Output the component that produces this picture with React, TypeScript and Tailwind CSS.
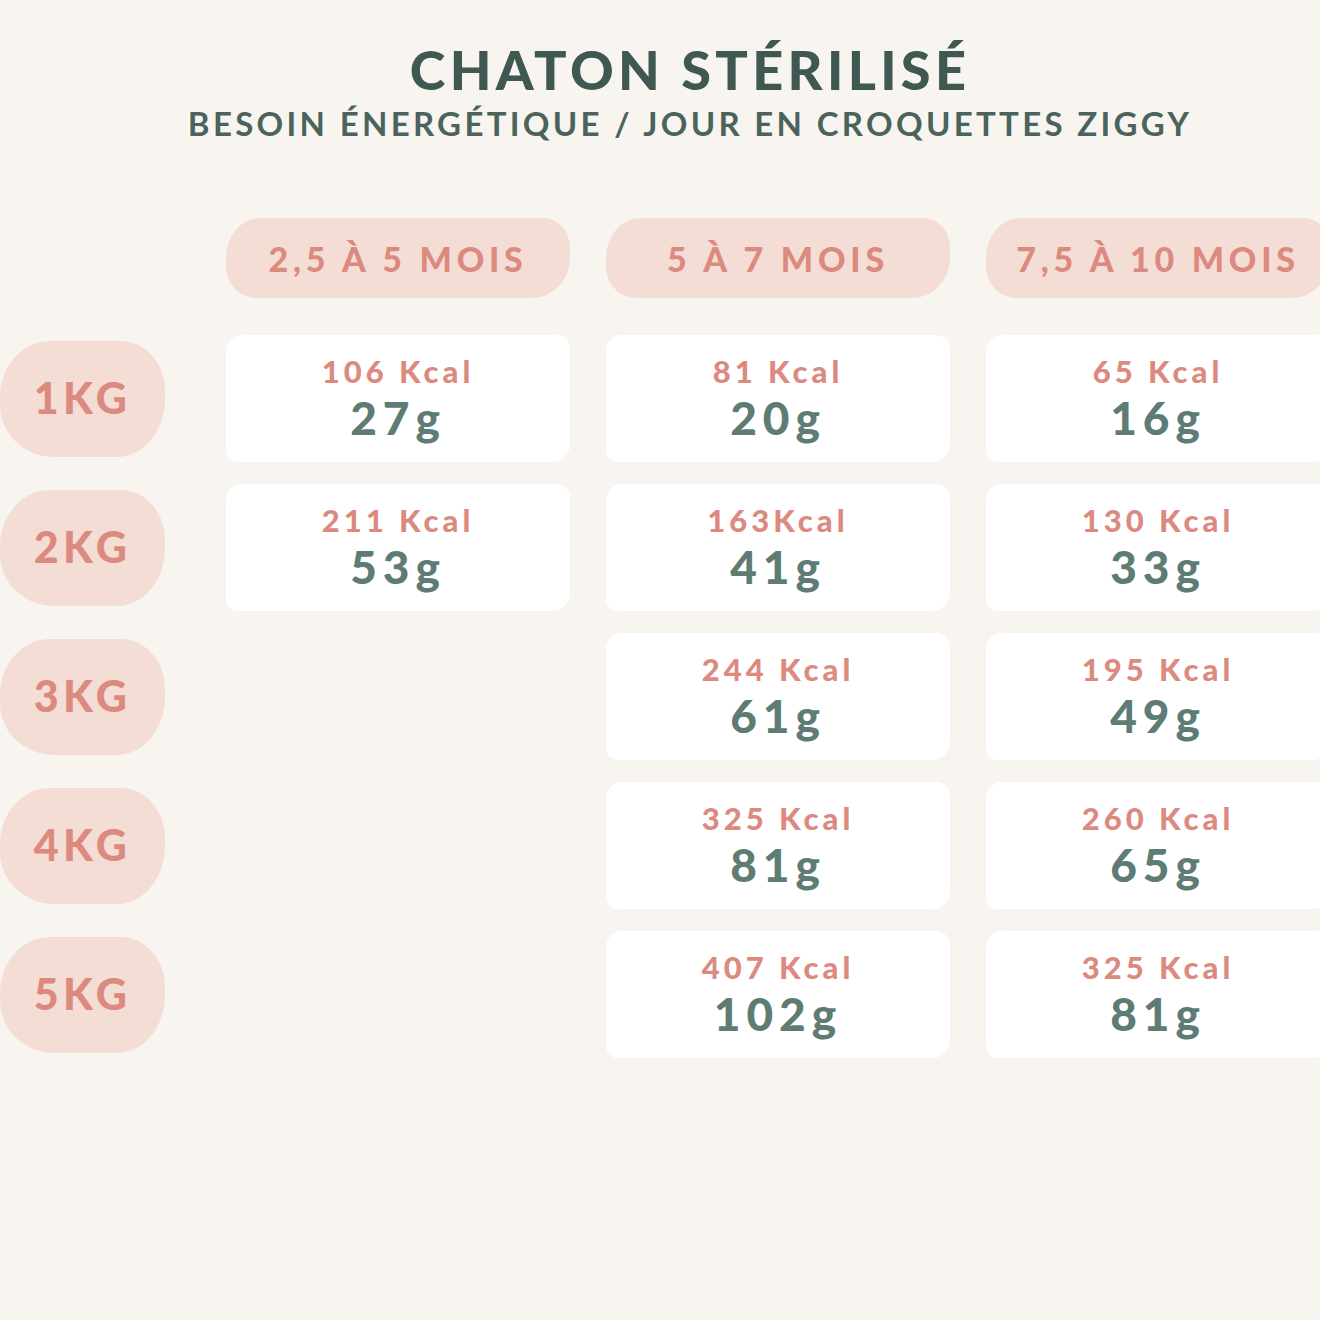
import React from "react";

type Cell = { kcal: string; g: string } | null;

const ages = ["2,5 À 5 MOIS", "5 À 7 MOIS", "7,5 À 10 MOIS"];

const rows: { kg: string; cells: Cell[] }[] = [
  { kg: "1KG", cells: [{ kcal: "106 Kcal", g: "27g" }, { kcal: "81 Kcal", g: "20g" }, { kcal: "65 Kcal", g: "16g" }] },
  { kg: "2KG", cells: [{ kcal: "211 Kcal", g: "53g" }, { kcal: "163Kcal", g: "41g" }, { kcal: "130 Kcal", g: "33g" }] },
  { kg: "3KG", cells: [null, { kcal: "244 Kcal", g: "61g" }, { kcal: "195 Kcal", g: "49g" }] },
  { kg: "4KG", cells: [null, { kcal: "325 Kcal", g: "81g" }, { kcal: "260 Kcal", g: "65g" }] },
  { kg: "5KG", cells: [null, { kcal: "407 Kcal", g: "102g" }, { kcal: "325 Kcal", g: "81g" }] },
];

const font = { fontFamily: "Lato, 'Open Sans', sans-serif" };

export default function App() {
  return (
    <div className="w-[1320px] h-[1320px] overflow-hidden bg-[#f8f5f0]" style={font}>
      {/* heading */}
      <div className="pl-[60px] pt-[40px] flex flex-col items-center">
        <h1 className="text-[54px] leading-[60px] font-black tracking-[0.08em] text-[#3f5852]">CHATON STÉRILISÉ</h1>
        <p className="mt-[3px] text-[33px] leading-[40px] font-bold tracking-[0.1em] text-[#4b635c]">
          BESOIN ÉNERGÉTIQUE / JOUR EN CROQUETTES ZIGGY
        </p>
      </div>

      <div className="mt-[75px] grid grid-cols-[190px_344px_344px_344px] gap-x-[36px] gap-y-[22px] w-[1360px]">
        {/* age headers */}
        <div />
        {ages.map((a) => (
          <div
            key={a}
            className="h-[80px] mb-[15px] flex items-center justify-center bg-[#f4ddd4] rounded-[34px_26px_38px_30px/40px_30px_40px_32px] text-[34px] font-black tracking-[0.14em] text-[#dc8a7f]"
          >
            {a}
          </div>
        ))}

        {rows.map((r) => (
          <React.Fragment key={r.kg}>
            <div className="h-[127px] flex items-center">
              <div className="w-[165px] h-[116px] flex items-center justify-center bg-[#f4ddd4] rounded-[50px_44px_48px_54px/56px_50px_58px_52px] text-[43px] font-black tracking-[0.1em] text-[#dc8a7f]">
                {r.kg}
              </div>
            </div>
            {r.cells.map((c, i) =>
              c ? (
                <div
                  key={i}
                  className="h-[127px] bg-white rounded-[16px_14px_18px_12px] flex flex-col items-center justify-center"
                >
                  <span className="text-[31px] leading-[37px] font-black tracking-[0.13em] text-[#dc8a7f]">{c.kcal}</span>
                  <span className="text-[46px] leading-[55px] font-black tracking-[0.13em] text-[#5e7c74]">{c.g}</span>
                </div>
              ) : (
                <div key={i} />
              )
            )}
          </React.Fragment>
        ))}
      </div>
    </div>
  );
}
